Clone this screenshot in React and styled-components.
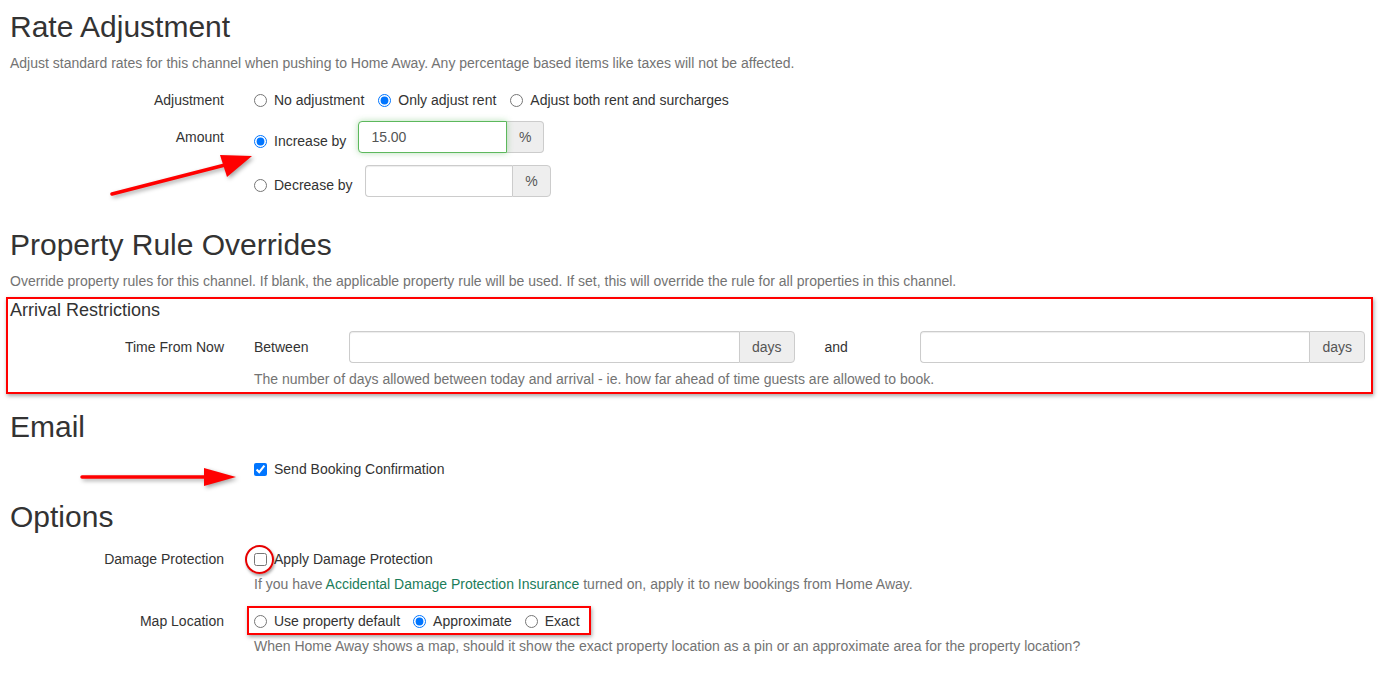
import React from 'react'
import styled, { createGlobalStyle } from 'styled-components'

const GlobalStyle = createGlobalStyle`
  html, body {
    margin: 0;
    padding: 0;
    background: #fff;
  }
  body {
    font-family: "Liberation Sans", Arial, sans-serif;
    font-size: 14px;
    line-height: 20px;
    color: #333;
  }
`

const Page = styled.div`
  position: relative;
  padding: 0 10px 20px 10px;
`

const Heading = styled.h2`
  margin: ${p => p.$top || 0}px 0 0 0;
  font-size: 30px;
  line-height: 33px;
  font-weight: 400;
  color: #333;
`

const Description = styled.p`
  margin: 10px 0 0 0;
  font-size: 14px;
  line-height: 20px;
  color: #737373;
`

const Row = styled.div`
  display: flex;
  align-items: flex-start;
  margin-top: ${p => p.$top || 0}px;
`

const Label = styled.div`
  flex: 0 0 214px;
  text-align: right;
  padding-top: ${p => p.$pad || 0}px;
`

const Controls = styled.div`
  flex: 1;
  margin-left: 30px;
  display: flex;
  flex-direction: column;
  gap: ${p => p.$gap || 0}px;
  min-width: 0;
`

const Inline = styled.div`
  display: flex;
  align-items: center;
  gap: 14px;
`

const Choice = styled.label`
  display: inline-flex;
  align-items: center;
  gap: 7px;
  white-space: nowrap;
  margin-top: ${p => p.$top || 0}px;
  input {
    margin: 0;
    width: 13px;
    height: 13px;
    accent-color: #0075ff;
  }
`

const AmountLine = styled.div`
  display: flex;
  align-items: flex-start;
  gap: 12px;
`

const InputGroup = styled.div`
  display: flex;
  width: ${p => (p.$width ? `${p.$width}px` : 'auto')};
`

const TextInput = styled.input`
  flex: 1;
  min-width: 0;
  height: 32px;
  box-sizing: border-box;
  padding: 6px 12px;
  font-family: "Liberation Sans", Arial, sans-serif;
  font-size: 14px;
  color: #555;
  border: 1px solid ${p => (p.$success ? '#5cb85c' : '#ccc')};
  border-right: ${p => (p.$success ? '1px solid #5cb85c' : 'none')};
  border-radius: 4px 0 0 4px;
  box-shadow: ${p => (p.$success ? '0 0 6px rgba(92,184,92,0.45)' : 'inset 0 1px 1px rgba(0,0,0,.075)')};
  outline: none;
  position: relative;
  z-index: 1;
`

const Addon = styled.span`
  display: flex;
  align-items: center;
  justify-content: center;
  height: 32px;
  box-sizing: border-box;
  padding: 0 12px;
  background: #eee;
  color: #555;
  font-size: 14px;
  border: 1px solid #ccc;
  border-left: ${p => (p.$joined ? '1px solid #ccc' : 'none')};
  border-radius: 0 4px 4px 0;
`

const Annotated = styled.div`
  border: 2px solid #f00;
  box-shadow: 1px 2px 4px rgba(0, 0, 0, 0.35);
  margin: 6px -2px 0 -4px;
  padding: 1px 6px 0 2px;
`

const BoxTitle = styled.div`
  font-size: 18px;
  line-height: 20px;
`

const RangeGrid = styled.div`
  display: grid;
  grid-template-columns: 95px 1fr 125px 1fr;
  align-items: center;
`

const AndText = styled.span`
  padding-left: 30px;
`

const Help = styled.div`
  color: #737373;
  font-size: 14px;
  line-height: 20px;
  padding-bottom: ${p => p.$bottom || 0}px;
  a {
    color: #1b7d5a;
    text-decoration: none;
  }
`

const CircleWrap = styled.span`
  position: relative;
  display: inline-flex;
  &::after {
    content: '';
    position: absolute;
    left: -9px;
    top: -8px;
    width: 25px;
    height: 25px;
    border: 2px solid #e60000;
    border-radius: 50%;
    box-shadow: 1px 2px 3px rgba(0, 0, 0, 0.35);
  }
`

const RadioBox = styled.div`
  display: inline-flex;
  align-items: center;
  gap: 13px;
  align-self: flex-start;
  border: 2px solid #f00;
  box-shadow: 1px 2px 4px rgba(0, 0, 0, 0.35);
  margin: -5px 0 -4px -7px;
  padding: 3px 9px 2px 5px;
`

const Arrow = styled.svg`
  position: absolute;
  left: ${p => p.$x}px;
  top: ${p => p.$y}px;
  overflow: visible;
  filter: drop-shadow(2px 2px 2px rgba(0, 0, 0, 0.35));
`

const Radio = ({ name, checked, children, top }) => (
  <Choice $top={top}>
    <input type="radio" name={name} defaultChecked={checked} />
    {children}
  </Choice>
)

export default function App() {
  return (
    <Page>
      <GlobalStyle />

      <Heading $top={10}>Rate Adjustment</Heading>
      <Description>
        Adjust standard rates for this channel when pushing to Home Away. Any percentage based items like taxes will not be affected.
      </Description>

      <Row $top={17}>
        <Label>Adjustment</Label>
        <Controls>
          <Inline>
            <Radio name="adj">No adjustment</Radio>
            <Radio name="adj" checked>Only adjust rent</Radio>
            <Radio name="adj">Adjust both rent and surcharges</Radio>
          </Inline>
        </Controls>
      </Row>

      <Row $top={11}>
        <Label $pad={6}>Amount</Label>
        <Controls $gap={12}>
          <AmountLine>
            <Radio name="amt" checked top={10}>Increase by</Radio>
            <InputGroup $width={186}>
              <TextInput $success defaultValue="15.00" />
              <Addon>%</Addon>
            </InputGroup>
          </AmountLine>
          <AmountLine>
            <Radio name="amt" top={10}>Decrease by</Radio>
            <InputGroup $width={186}>
              <TextInput />
              <Addon $joined>%</Addon>
            </InputGroup>
          </AmountLine>
        </Controls>
      </Row>

      <Heading $top={31}>Property Rule Overrides</Heading>
      <Description>
        Override property rules for this channel. If blank, the applicable property rule will be used. If set, this will override the rule for all properties in this channel.
      </Description>

      <Annotated>
        <BoxTitle>Arrival Restrictions</BoxTitle>
        <Row $top={11}>
          <Label $pad={6}>Time From Now</Label>
          <Controls $gap={6}>
            <RangeGrid>
              <span>Between</span>
              <InputGroup>
                <TextInput />
                <Addon $joined>days</Addon>
              </InputGroup>
              <AndText>and</AndText>
              <InputGroup>
                <TextInput />
                <Addon $joined>days</Addon>
              </InputGroup>
            </RangeGrid>
            <Help $bottom={3}>
              The number of days allowed between today and arrival - ie. how far ahead of time guests are allowed to book.
            </Help>
          </Controls>
        </Row>
      </Annotated>

      <Heading $top={16}>Email</Heading>
      <Row $top={16}>
        <Label />
        <Controls>
          <Choice>
            <input type="checkbox" defaultChecked />
            Send Booking Confirmation
          </Choice>
        </Controls>
      </Row>

      <Heading $top={21}>Options</Heading>
      <Row $top={16}>
        <Label>Damage Protection</Label>
        <Controls $gap={5}>
          <Choice>
            <CircleWrap>
              <input type="checkbox" />
            </CircleWrap>
            Apply Damage Protection
          </Choice>
          <Help>
            If you have <a href="#">Accidental Damage Protection Insurance</a> turned on, apply it to new bookings from Home Away.
          </Help>
        </Controls>
      </Row>

      <Row $top={17}>
        <Label>Map Location</Label>
        <Controls $gap={5}>
          <RadioBox>
            <Radio name="map">Use property default</Radio>
            <Radio name="map" checked>Approximate</Radio>
            <Radio name="map">Exact</Radio>
          </RadioBox>
          <Help>
            When Home Away shows a map, should it show the exact property location as a pin or an approximate area for the property location?
          </Help>
        </Controls>
      </Row>

      <Arrow $x={110} $y={140} width="145" height="48" viewBox="0 0 145 48">
        <line x1="2" y1="44" x2="115" y2="15" stroke="#f00" strokeWidth="3.5" strokeLinecap="round" />
        <polygon points="142,6 110,5 117,27" fill="#f00" />
      </Arrow>
      <Arrow $x={80} $y={456} width="160" height="22" viewBox="0 0 160 22">
        <line x1="2" y1="11" x2="128" y2="11" stroke="#f00" strokeWidth="3.5" strokeLinecap="round" />
        <polygon points="156,11 124,2 124,20" fill="#f00" />
      </Arrow>
    </Page>
  )
}
